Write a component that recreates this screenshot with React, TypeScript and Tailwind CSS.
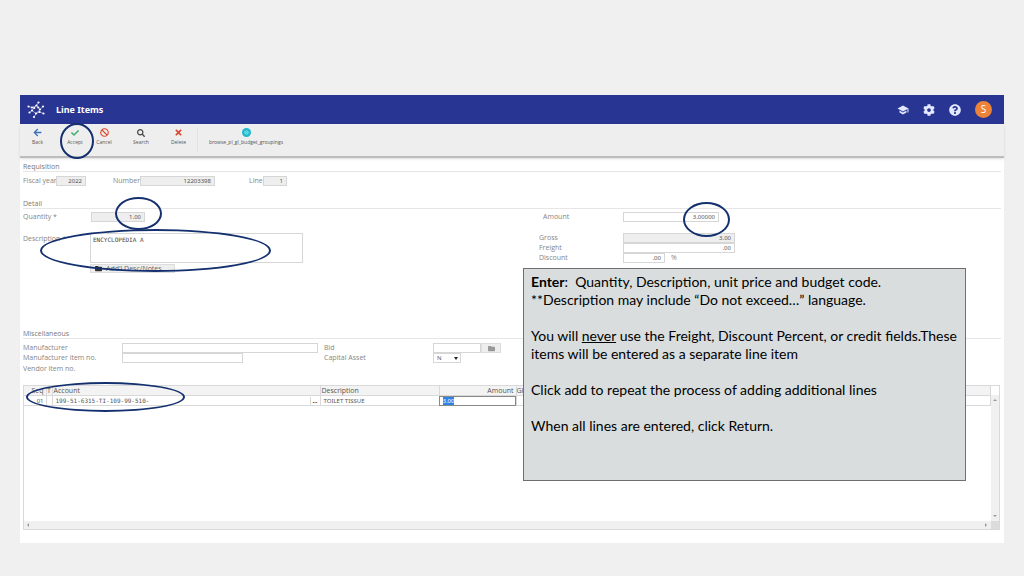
import React from "react";
import { FaArrowLeft, FaBan, FaCheck, FaCog, FaFolder, FaQuestionCircle, FaSearch, FaTimes } from "react-icons/fa";
import { MdSchool } from "react-icons/md";

const box = "h-[10px] border border-[#d6d6d6] px-[3px] text-right font-['Noto_Sans',sans-serif] text-[6px] leading-[8px] text-[#555]";

const Logo = () => (
  <svg viewBox="0 0 18 18" className="size-[18px]" fill="none" stroke="#fff" strokeLinecap="round">
    <path
      d="M11.500 1.500 9.500 4.500 5 9.500 2.500 11.500M1.500 5.500 5 6.500 9.500 4.500 13 8.500M16 5.500 13 8.500 9 12.500 7 16M5 9.500 9 12.500 12.500 11 16.500 12.500"
      strokeWidth=".9"
      strokeOpacity=".6"
    />
    <path
      d="M11.500 1.500h0M9.500 4.500h0M7.200 7h0M5 9.500h0M2.500 11.500h0M1.500 5.500h0M5 6.500h0M11.300 6.500h0M13 8.500h0M16 5.500h0M9 12.500h0M7 16h0M12.500 11h0M16.500 12.500h0"
      strokeWidth="2.200"
    />
  </svg>
);

const ToolButton = ({ label, className, children }: { label: string; className: string; children: React.ReactNode }) => (
  <button className={"flex flex-col items-center gap-px text-[5px] leading-[8px] text-[#555] " + className}>
    <span className="flex h-[9px] items-center text-[9px]">{children}</span>
    {label}
  </button>
);

const Heading = ({ className, children }: { className: string; children: string }) => (
  <h2 className={"border-b border-[#e6e6e6] text-[7px] leading-[9px] text-[#777] " + className}>{children}</h2>
);

const Field = ({ id, label, value, labelClass, inputClass }: { id: string; label: string; value?: string; labelClass: string; inputClass: string }) => (
  <div className="flex h-[10px] items-center">
    <label htmlFor={id} className={"shrink-0 leading-[12px] whitespace-nowrap " + labelClass}>{label}</label>
    <input id={id} defaultValue={value} className={box + " " + inputClass} />
  </div>
);

const Ring = ({ className }: { className: string }) => (
  <div className={"pointer-events-none absolute rounded-[50%] border-2 border-[#14306f] " + className} />
);

const LineItems = () => (
  <div className="relative bg-white font-['Open_Sans',sans-serif] text-[7px] leading-[12px] text-[#858585]">
    <header className="flex h-[29px] items-center bg-[#283593] px-[7px] text-white">
      <Logo />
      <h1 className="ml-[11px] font-['Noto_Sans',sans-serif] text-[9px] font-bold">Line Items</h1>
      <div className="ml-auto flex items-center gap-[14px] pr-[5px]">
        <button aria-label="Learning"><MdSchool className="size-3 text-[#e3e8ff]" /></button>
        <button aria-label="Settings"><FaCog className="size-3 text-[#e3e8ff]" /></button>
        <button aria-label="Help"><FaQuestionCircle className="size-3 text-[#e3e8ff]" /></button>
        <button className="size-[17px] rounded-full bg-[#ec8338] text-[10px] leading-[17px]">S</button>
      </div>
    </header>

    <div className="flex h-[34px] items-start border-b-2 border-[#bdbdbd] bg-[#eee] pt-[4px] shadow-sm">
      <ToolButton label="Back" className="w-[35px]"><FaArrowLeft className="text-[#3d6fb8]" /></ToolButton>
      <ToolButton label="Accept" className="w-[40px]"><FaCheck className="size-2 text-[#3fae74]" /></ToolButton>
      <ToolButton label="Cancel" className="w-[18px]"><FaBan className="text-[#dc4a34]" /></ToolButton>
      <ToolButton label="Search" className="ml-2 w-[40px]"><FaSearch className="size-2 text-[#444]" /></ToolButton>
      <ToolButton label="Delete" className="w-[35px]"><FaTimes className="text-[#dc4a34]" /></ToolButton>
      <div className="ml-px h-[24px] w-px bg-[#e2e2e2]" />
      <ToolButton label="browse_pl_gl_budget_groupings" className="w-[96px]">
        <svg viewBox="0 0 9 9" className="size-[9px]">
          <circle cx="4.500" cy="4.500" r="4.500" fill="#1fb9cf" />
          <circle cx="4.500" cy="4.500" r="1.700" fill="none" stroke="#a8e9f1" strokeWidth=".8" />
          <path d="M3.500 4.500h2" stroke="#a8e9f1" strokeWidth=".6" />
        </svg>
      </ToolButton>
    </div>

    <main className="px-[3px] pb-[13px]">
      <Heading className="pt-1">Requisition</Heading>
      <div className="mt-1 flex">
        <Field id="year" label="Fiscal year" value="2022" labelClass="w-[33px]" inputClass="w-[30px] bg-[#eee]" />
        <div className="w-[27px]" />
        <Field id="number" label="Number" value="12203398" labelClass="w-[27px]" inputClass="w-[75px] bg-[#eee]" />
        <div className="w-[34px]" />
        <Field id="line" label="Line" value="1" labelClass="w-[14px]" inputClass="w-[24px] bg-[#eee]" />
      </div>

      <Heading className="mt-[13px]">Detail</Heading>
      <div className="mt-[3px] grid grid-cols-[516px_1fr]">
        <div>
          <Field id="qty" label="Quantity *" value="1.00" labelClass="w-[68px]" inputClass="w-[54px] bg-[#eee]" />
          <div className="mt-[11px] flex">
            <label htmlFor="desc" className="w-[67px]">Description *</label>
            <div>
              <textarea
                id="desc"
                defaultValue="ENCYCLOPEDIA A"
                className="block h-[30px] w-[213px] resize-none border border-[#d6d6d6] px-[2px] py-px font-['DejaVu_Sans_Mono',monospace] text-[6px] leading-[10px] text-[#444]"
              />
              <button className="mt-px flex h-[9px] w-[85px] items-center gap-1 border border-[#ddd] bg-[#eee] px-1 leading-[7px] text-[#666]">
                <FaFolder className="size-[7px] text-[#333]" />
                Add'l Desc/Notes
              </button>
            </div>
          </div>
        </div>
        <div>
          <div className="pl-1">
            <Field id="amount" label="Amount" value="3.00000" labelClass="w-[80px]" inputClass="w-[96px]" />
          </div>
          <div className="mt-[11px]">
            <Field id="gross" label="Gross" value="3.00" labelClass="w-[84px]" inputClass="w-[112px] bg-[#eee]" />
            <Field id="freight" label="Freight" value=".00" labelClass="w-[84px]" inputClass="w-[112px]" />
            <div className="flex h-[10px] items-center gap-[6px]">
              <Field id="discount" label="Discount" value=".00" labelClass="w-[84px]" inputClass="w-[42px]" />
              <span>%</span>
            </div>
          </div>
        </div>
      </div>

      <Heading className="mt-[56px]">Miscellaneous</Heading>
      <div className="mt-1 grid grid-cols-[301px_1fr]">
        <div>
          <Field id="mfr" label="Manufacturer" labelClass="w-[99px]" inputClass="w-[196px]" />
          <Field id="mfr-item" label="Manufacturer item no." labelClass="w-[99px]" inputClass="w-[121px]" />
          <p>Vendor item no.</p>
        </div>
        <div>
          <div className="flex">
            <Field id="bid" label="Bid" labelClass="w-[109px]" inputClass="w-[48px]" />
            <button aria-label="Find bid" className="flex h-[10px] w-5 items-center justify-center border border-[#ddd] bg-[#eee]">
              <FaFolder className="size-[7px] text-[#999]" />
            </button>
          </div>
          <div className="flex h-[10px] items-center">
            <label htmlFor="asset" className="w-[109px]">Capital Asset</label>
            <div className="relative">
              <select id="asset" className="block h-[10px] w-[28px] appearance-none border border-[#d6d6d6] pl-[3px] text-[6px] leading-[8px] text-[#555]">
                <option>N</option>
              </select>
              <svg viewBox="0 0 4 3" className="pointer-events-none absolute top-[4px] right-[3px] h-[3px] w-[4px]">
                <path d="M0 0h4L2 3z" fill="#222" />
              </svg>
            </div>
          </div>
        </div>
      </div>

      <div className="mt-[10px] mr-px border border-[#d9d9d9]">
        <div className="flex h-[135px]">
          <div className="min-w-0 flex-1">
            <table className="w-full table-fixed border-collapse text-left text-[#555]">
              <thead>
                <tr className="h-[9px] bg-[#f3f3f3] leading-[9px] *:border-r *:border-[#d9d9d9] *:p-0 *:font-normal">
                  <th className="w-[22px] text-right"><span className="pr-[2px]">Seq</span></th>
                  <th className="w-[6px] text-center">T</th>
                  <th className="w-[268px]"><span className="pl-px">Account</span></th>
                  <th className="w-[119px]"><span className="pl-px">Description</span></th>
                  <th className="w-[77px] text-right"><span className="pr-[2px]">Amount</span></th>
                  <th>Gl</th>
                </tr>
              </thead>
              <tbody>
                <tr className="h-[10px] border-y border-[#d9d9d9] font-['Noto_Sans',sans-serif] text-[6px] leading-[8px] *:border-r *:border-[#d9d9d9] *:p-0">
                  <td className="text-right"><span className="pr-[2px]">01</span></td>
                  <td></td>
                  <td>
                    <div className="flex">
                      <input aria-label="Account" defaultValue="199-51-6315-TI-109-99-510-" className="h-[8px] min-w-0 flex-1 pl-[3px] font-['DejaVu_Sans_Mono',monospace]" />
                      <button aria-label="Find account" className="w-[10px] border-l border-[#d9d9d9] font-bold text-[#222]">...</button>
                    </div>
                  </td>
                  <td><span className="pl-[3px]">TOILET TISSUE</span></td>
                  <td className="outline -outline-offset-1 outline-[#888]"><span className="ml-[3px] bg-[#2f83e8] text-white">3.00</span></td>
                  <td></td>
                </tr>
              </tbody>
            </table>
          </div>
          <div className="mt-[9px] flex w-2 flex-col items-center justify-between bg-[#f0f0f0] py-1">
            <svg viewBox="0 0 4 2" className="h-[2px] w-[4px]"><path d="M0 2h4L2 0z" fill="#999" /></svg>
            <svg viewBox="0 0 4 2" className="h-[2px] w-[4px]"><path d="M0 0h4L2 2z" fill="#999" /></svg>
          </div>
        </div>
        <div className="flex h-[8px] items-center justify-between bg-[#f0f0f0] pl-[3px]">
          <svg viewBox="0 0 2 4" className="h-[4px] w-[2px]"><path d="M2 0v4L0 2z" fill="#999" /></svg>
          <div className="flex h-full items-center gap-1">
            <svg viewBox="0 0 2 4" className="h-[4px] w-[2px]"><path d="M0 0v4l2-2z" fill="#999" /></svg>
            <div className="h-full w-2 bg-[#dcdcdc]" />
          </div>
        </div>
      </div>
    </main>

    {/* Highlights and instructions over the form */}
    <Ring className="top-[28px] left-[40px] h-[36px] w-[34px]" />
    <Ring className="top-[102px] left-[95px] h-[33px] w-[47px]" />
    <Ring className="top-[134px] left-[20px] h-[43px] w-[231px]" />
    <Ring className="top-[287px] left-[6px] h-[30px] w-[159px]" />
    <Ring className="top-[107px] left-[663px] h-[35px] w-[47px]" />
    <aside className="absolute top-[173px] left-[503px] h-[213px] w-[443px] border border-[#6f6f6f] bg-[#d9dddd] px-[7px] py-[4px] font-['Lato',sans-serif] text-[14px] leading-[18px] whitespace-pre text-black">
      <p><b>Enter</b>:  Quantity, Description, unit price and budget code.</p>
      <p>**Description may include “Do not exceed…” language.</p>
      <p className="mt-[18px]">You will <u>never</u> use the Freight, Discount Percent, or credit fields.These</p>
      <p>items will be entered as a separate line item</p>
      <p className="mt-[18px]">Click add to repeat the process of adding additional lines</p>
      <p className="mt-[18px]">When all lines are entered, click Return.</p>
    </aside>
  </div>
);

const App = () => (
  <div className="min-h-screen bg-[#f0f0f0] px-5 pt-[95px] pb-8">
    <LineItems />
  </div>
);

export default App;
